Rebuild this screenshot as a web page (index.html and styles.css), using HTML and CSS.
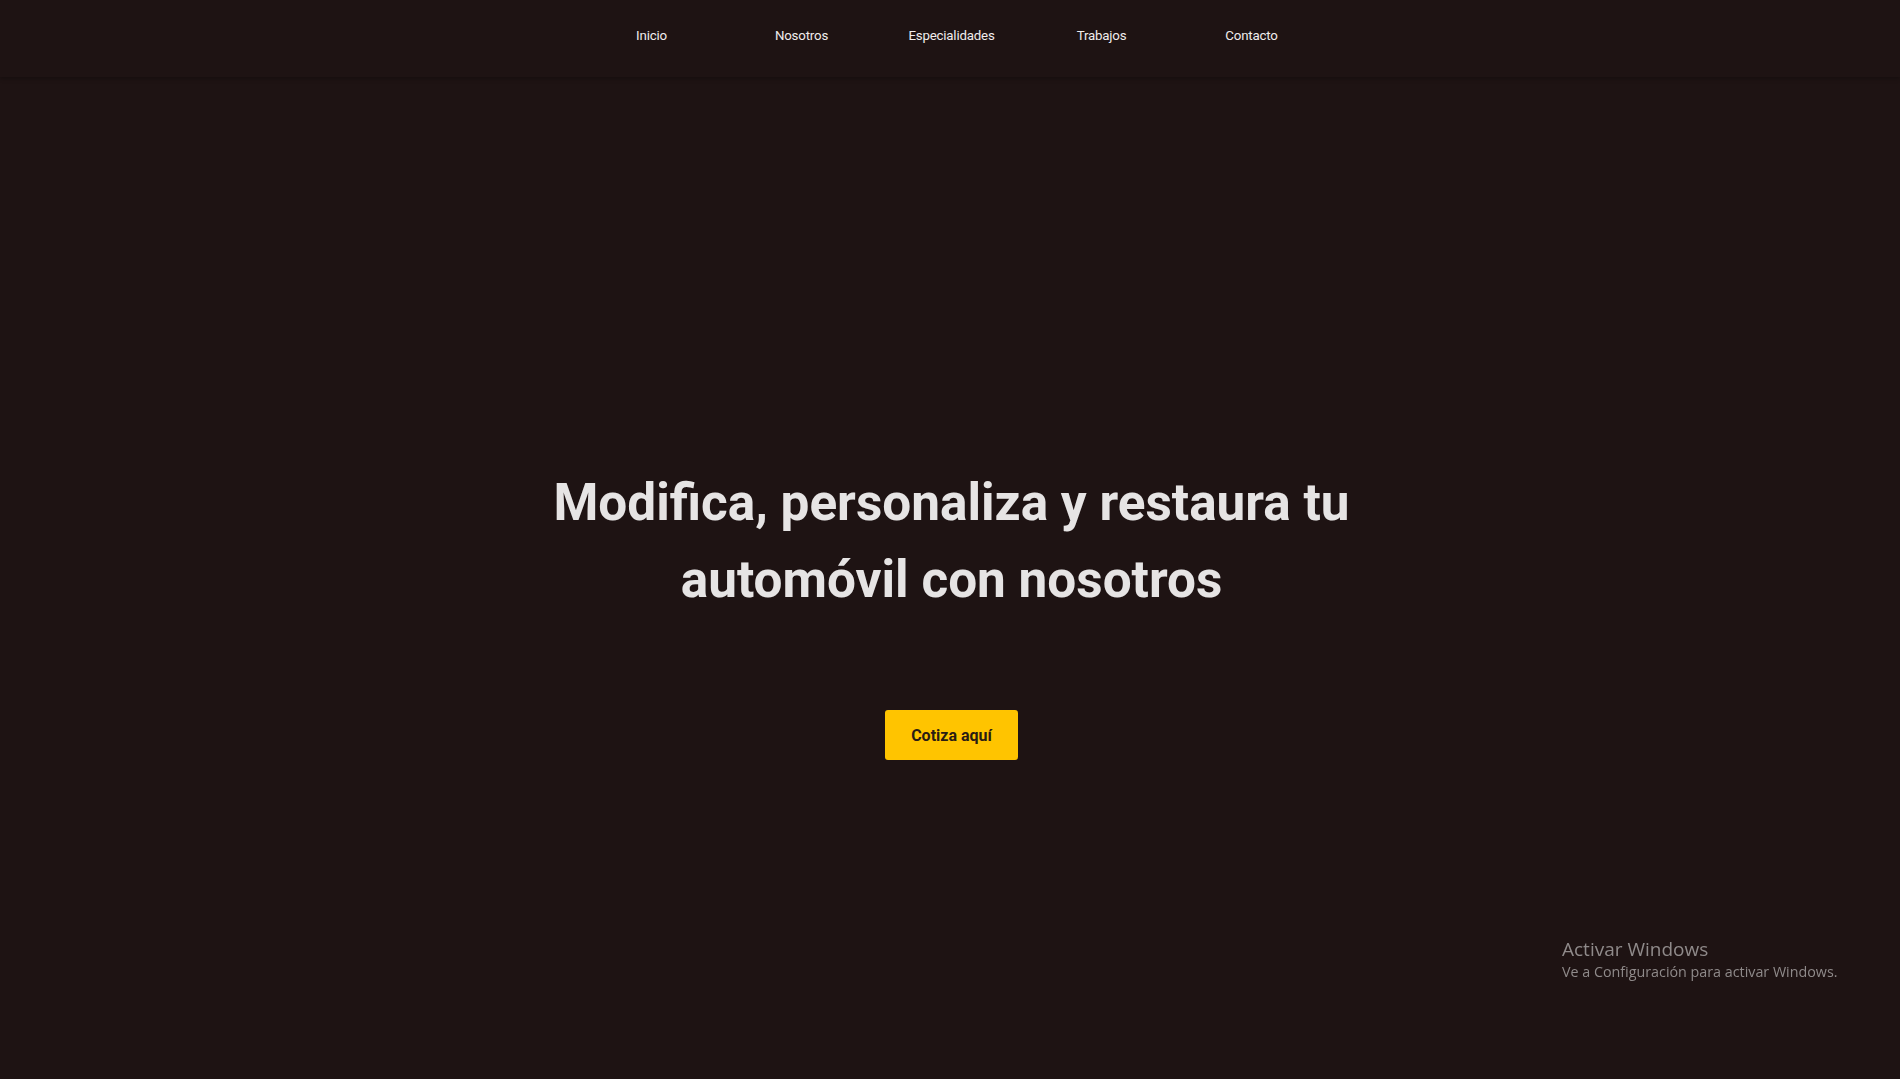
FILE: index.html
```html
<!DOCTYPE html>
<html lang="es">
<head>
<meta charset="utf-8">
<title>Taller</title>
<link rel="stylesheet" href="styles.css">
</head>
<body>
<header class="navbar">
  <nav class="nav">
    <a class="nav-link" href="#">Inicio</a>
    <a class="nav-link" href="#">Nosotros</a>
    <a class="nav-link" href="#">Especialidades</a>
    <a class="nav-link" href="#">Trabajos</a>
    <a class="nav-link" href="#">Contacto</a>
  </nav>
</header>
<main class="hero">
  <h1 class="hero-title">Modifica, personaliza y restaura tu<br>automóvil con nosotros</h1>
  <a class="btn-quote" href="#">Cotiza aquí</a>
</main>
<div class="watermark">
  <div class="wm-title">Activar Windows</div>
  <div class="wm-sub">Ve a Configuración para activar Windows.</div>
</div>
</body>
</html>
```
FILE: styles.css
```css
html, body {
  margin: 0;
  padding: 0;
  height: 100%;
}
body {
  background: #1e1313;
  font-family: Roboto, "Liberation Sans", sans-serif;
  overflow: hidden;
}
.navbar {
  height: 77px;
  background: #1e1313;
  box-shadow: 0 2px 4px rgba(0, 0, 0, 0.25);
  position: relative;
  z-index: 1;
}
.nav {
  display: flex;
  justify-content: center;
  align-items: center;
  height: 100%;
  padding-bottom: 7px;
  padding-left: 3px;
  box-sizing: border-box;
}
.nav-link {
  width: 150px;
  text-align: center;
  color: #f0ecec;
  text-decoration: none;
  font-size: 13.3px;
  font-weight: 400;
  letter-spacing: -0.2px;
}
.hero {
  display: flex;
  flex-direction: column;
  align-items: center;
  padding-top: 387px;
  padding-left: 3px;
}
.hero-title {
  margin: 0;
  text-align: center;
  color: #e6e4e4;
  font-size: 51.3px;
  line-height: 77px;
  font-weight: 700;
}
.btn-quote {
  margin-top: 92px;
  width: 133px;
  height: 50px;
  display: flex;
  align-items: center;
  justify-content: center;
  background: #ffc400;
  color: #2a1c14;
  border-radius: 3px;
  text-decoration: none;
  font-weight: 700;
  font-size: 16px;
}
.watermark {
  position: fixed;
  left: 1562px;
  top: 936px;
  color: #8f8a8a;
  font-family: "Open Sans", "Noto Sans", sans-serif;
}
.wm-title {
  font-size: 19px;
  line-height: 26px;
}
.wm-sub {
  font-size: 14.3px;
  line-height: 20px;
}
```
